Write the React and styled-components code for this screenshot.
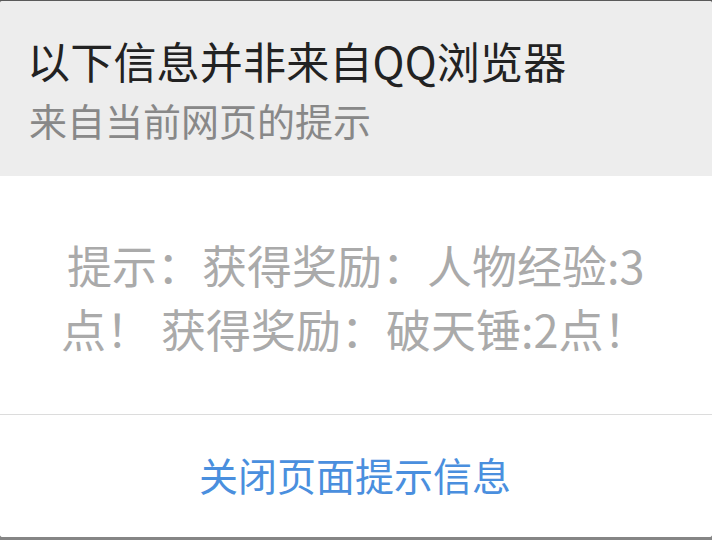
import styled, { createGlobalStyle } from "styled-components";

const GlobalStyle = createGlobalStyle`
  html, body {
    margin: 0;
    padding: 0;
    background: #858585;
  }
  body {
    font-family: "Noto Sans CJK SC", "Noto Sans", sans-serif;
  }
`;

const Screen = styled.div`
  width: 712px;
  height: 540px;
  padding-top: 1px;
  box-sizing: border-box;
  background: linear-gradient(#5a5a5a 0 1px, #858585 1px);
`;

const Dialog = styled.div`
  height: 536px;
  border-radius: 3px;
  overflow: hidden;
  background: #fff;
  display: flex;
  flex-direction: column;
`;

const Header = styled.header`
  height: 175px;
  box-sizing: border-box;
  padding: 31px 27px 0;
  background: #ededed;
`;

const Title = styled.h1`
  margin: 0;
  font-size: 43px;
  font-weight: 400;
  line-height: 56px;
  letter-spacing: 0.2px;
  color: #222;
`;

const Subtitle = styled.p`
  margin: 7px 0 0 2px;
  font-size: 38px;
  line-height: 50px;
  color: #888;
`;

const Message = styled.div`
  height: 239px;
  box-sizing: border-box;
  padding: 57px 56px 0 61px;
  text-indent: 6px;
  font-size: 45px;
  line-height: 64px;
  color: #aaa;
  border-bottom: 1px solid #dcdcdc;
`;

const Footer = styled.button`
  flex: 1;
  border: 0;
  background: #fff;
  font-family: inherit;
  font-size: 39px;
  color: #4a8fde;
  padding: 0 2px 4px 0;
  cursor: pointer;
`;

export default function App() {
  return (
    <>
      <GlobalStyle />
      <Screen>
        <Dialog>
          <Header>
            <Title>以下信息并非来自QQ浏览器</Title>
            <Subtitle>来自当前网页的提示</Subtitle>
          </Header>
          <Message>提示：获得奖励：人物经验:3点！ 获得奖励：破天锤:2点！</Message>
          <Footer>关闭页面提示信息</Footer>
        </Dialog>
      </Screen>
    </>
  );
}
